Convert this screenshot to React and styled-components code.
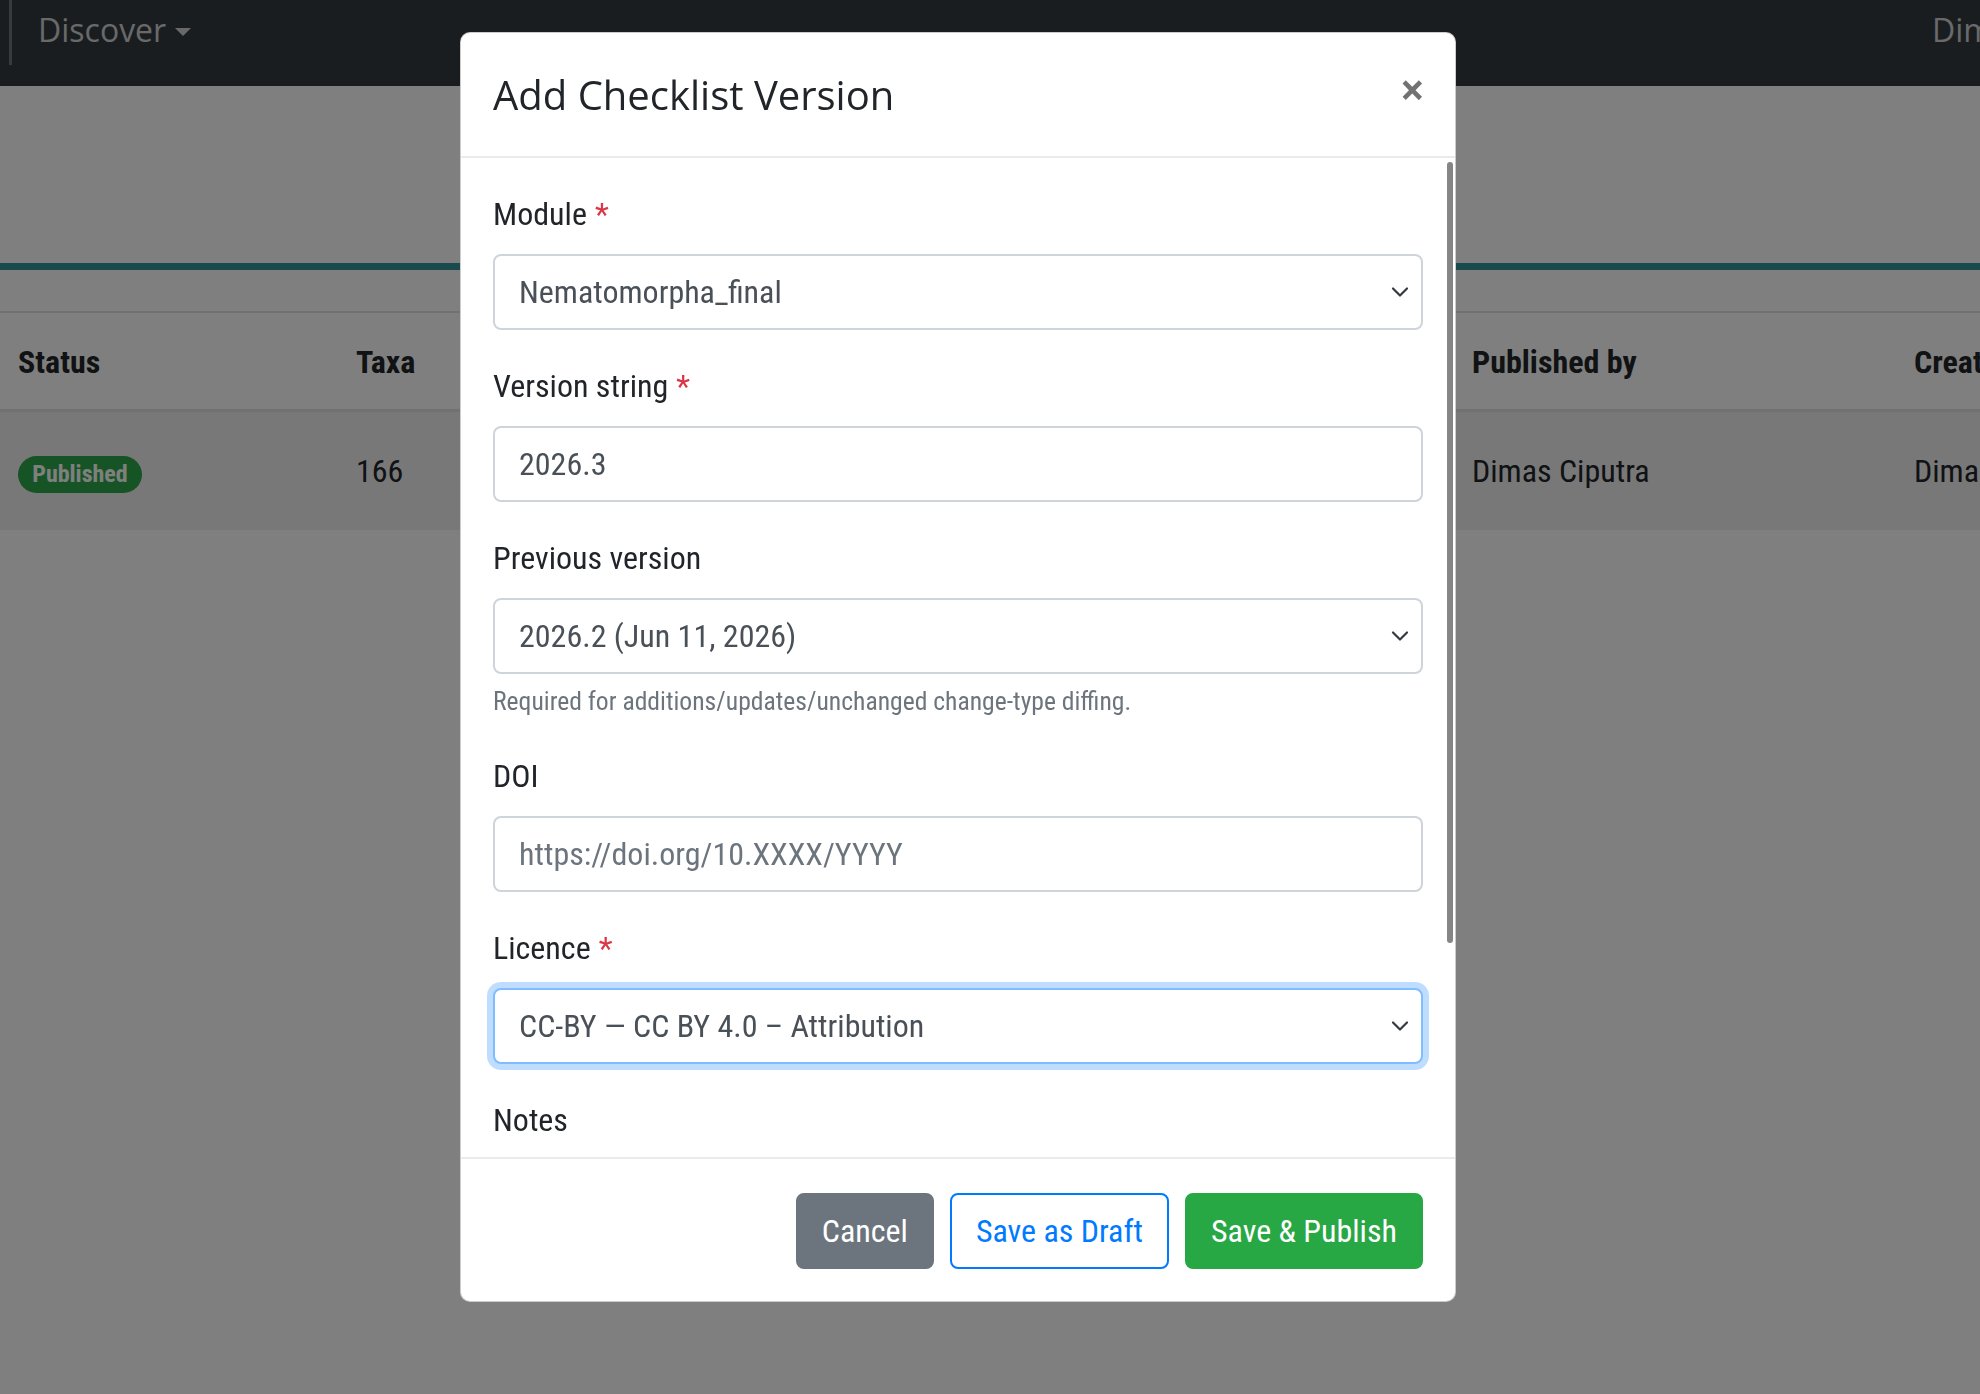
import React from 'react';
import styled, { createGlobalStyle } from 'styled-components';

const narrow = `"Roboto Condensed", "Roboto", "Liberation Sans", sans-serif`;
const sans = `"Open Sans", "Noto Sans", sans-serif`;

const GlobalStyle = createGlobalStyle`
  html, body { margin: 0; padding: 0; }
  body {
    width: 1980px;
    height: 1394px;
    overflow: hidden;
    background: #fff;
    font-family: ${narrow};
    font-stretch: condensed;
    color: #212529;
  }
  * { box-sizing: border-box; }
`;

const Page = styled.div`
  width: 1980px;
  height: 1394px;
  overflow: hidden;
`;

// ---- page behind the modal ----
const Navbar = styled.nav`
  height: 86px;
  background: #343a40;
  display: flex;
  align-items: flex-start;
  font-family: ${sans};
  font-stretch: normal;
`;

const NavSep = styled.div`
  width: 3px;
  height: 65px;
  margin-left: 9px;
  background: rgba(255, 255, 255, 0.3);
`;

const NavLink = styled.a`
  display: flex;
  align-items: center;
  margin-left: 26px;
  padding-top: 6px;
  font-size: 32px;
  line-height: 48px;
  color: rgba(255, 255, 255, 0.78);
`;

const Caret = styled.span`
  margin-left: 9px;
  margin-top: 4px;
  border-top: 8px solid currentColor;
  border-left: 8px solid transparent;
  border-right: 8px solid transparent;
`;

const NavUser = styled(NavLink)`
  margin-left: auto;
  margin-right: -164px;
`;

const Hero = styled.div`
  height: 177px;
`;

const TealRule = styled.div`
  height: 7px;
  background: #37949c;
  margin-bottom: 41px;
`;

const Row = styled.div`
  display: grid;
  grid-template-columns: 338px 300px 816px 442px 1fr;
  align-items: center;
  padding-left: 18px;
  white-space: nowrap;
  font-size: 32px;
  line-height: 48px;
  height: ${p => (p.$head ? '101px' : '118px')};
  padding-top: ${p => (p.$head ? '2px' : '0')};
  background: ${p => (p.$head ? '#fff' : '#f1f1f1')};
  border-top: ${p => (p.$head ? '2px solid #dee2e6' : 'none')};
  border-bottom: ${p => (p.$head ? '3px solid #dee2e6' : 'none')};
  font-weight: ${p => (p.$head ? 700 : 400)};
`;

const Badge = styled.span`
  display: inline-block;
  width: 124px;
  height: 37px;
  border-radius: 19px;
  background: #2ca84a;
  color: #fff;
  font-size: 24px;
  line-height: 37px;
  font-weight: 700;
  text-align: center;
`;

const Backdrop = styled.div`
  position: fixed;
  inset: 0;
  background: rgba(0, 0, 0, 0.5);
`;

// ---- modal ----
const ModalLayer = styled.div`
  position: fixed;
  inset: 0;
  padding: 32px 0 0 460px;
`;

const Dialog = styled.div`
  position: relative;
  width: 996px;
  height: 1270px;
  background: #fff;
  border: 1px solid rgba(0, 0, 0, 0.2);
  border-radius: 10px;
  display: flex;
  flex-direction: column;
  overflow: hidden;
`;

const Header = styled.div`
  display: flex;
  align-items: center;
  padding: 32px 32px 31px;
  border-bottom: 2px solid #e9ecef;
`;

const Title = styled.h5`
  margin: 0;
  font-family: ${sans};
  font-stretch: normal;
  font-weight: 400;
  font-size: 40px;
  line-height: 60px;
  color: #212529;
`;

const Close = styled.button`
  margin-left: auto;
  margin-top: -12px;
  margin-right: -2px;
  padding: 0;
  border: 0;
  background: none;
  font-family: ${sans};
  font-weight: 700;
  font-size: 44px;
  line-height: 1;
  color: #000;
  opacity: 0.55;
`;

const Body = styled.div`
  flex: 1;
  min-height: 0;
  overflow-y: auto;
  padding: 32px;
`;

// overlay scrollbar thumb of the scrolled modal body
const ScrollThumb = styled.div`
  position: absolute;
  right: 2px;
  top: 129px;
  width: 6px;
  height: 781px;
  border-radius: 3px;
  background: #868686;
`;

const Group = styled.div`
  margin-bottom: 32px;
`;

const Label = styled.label`
  display: block;
  font-size: 32px;
  line-height: 48px;
  margin-bottom: 16px;
  color: #212529;
`;

const Req = styled.span`
  color: #dc3545;
  margin-left: 8px;
`;

const fieldBase = `
  display: block;
  width: 100%;
  height: 76px;
  padding: 12px 24px;
  font-family: ${narrow};
  font-stretch: condensed;
  font-size: 32px;
  line-height: 48px;
  color: #495057;
  background: #fff;
  border-radius: 8px;
  outline: none;
`;

const Input = styled.input`
  ${fieldBase}
  border: 2px solid #ced4da;
  &::placeholder { color: #6c757d; }
`;

const TextArea = styled.textarea`
  ${fieldBase}
  height: 204px;
  resize: none;
  border: 2px solid #ced4da;
`;

const SelectWrap = styled.div`
  position: relative;
`;

const Select = styled.select`
  ${fieldBase}
  appearance: none;
  padding-right: 64px;
  border: 2px solid ${p => (p.$focus ? '#80bdff' : '#ced4da')};
  box-shadow: ${p => (p.$focus ? '0 0 0 6px rgba(0, 123, 255, 0.25)' : 'none')};
`;

const Chevron = styled.svg`
  position: absolute;
  right: 14px;
  top: 50%;
  transform: translateY(-50%);
  pointer-events: none;
`;

const Help = styled.small`
  display: block;
  margin-top: 8px;
  font-size: 25.6px;
  line-height: 38px;
  color: #6c757d;
`;

const Footer = styled.div`
  display: flex;
  justify-content: flex-end;
  align-items: center;
  gap: 16px;
  padding: 34px 32px 32px;
  border-top: 2px solid #e9ecef;
`;

const palette = {
  secondary: { bg: '#6c757d', border: '#6c757d', color: '#fff' },
  outline: { bg: '#fff', border: '#007bff', color: '#007bff' },
  success: { bg: '#28a745', border: '#28a745', color: '#fff' },
};

const Button = styled.button`
  height: 76px;
  padding: 12px 24px;
  font-family: ${narrow};
  font-stretch: condensed;
  font-size: 32px;
  line-height: 48px;
  border-radius: 8px;
  border: 2px solid ${p => palette[p.$kind].border};
  background: ${p => palette[p.$kind].bg};
  color: ${p => palette[p.$kind].color};
`;

const Arrow = () => (
  <Chevron width="18" height="11" viewBox="0 0 18 11">
    <path d="M2 2l7 7 7-7" fill="none" stroke="#343a40" strokeWidth="2.2" strokeLinecap="round" strokeLinejoin="round" />
  </Chevron>
);

export default function App() {
  return (
    <Page>
      <GlobalStyle />
      <Navbar>
        <NavSep />
        <NavLink>Discover<Caret /></NavLink>
        <NavUser>Dimas Ciputra</NavUser>
      </Navbar>
      <Hero />
      <TealRule />
      <Row $head>
        <div>Status</div>
        <div>Taxa</div>
        <div>Version</div>
        <div>Published by</div>
        <div>Created by</div>
      </Row>
      <Row>
        <div><Badge>Published</Badge></div>
        <div>166</div>
        <div>2026.2</div>
        <div>Dimas Ciputra</div>
        <div>Dimas Ciputra</div>
      </Row>
      <Backdrop />

      <ModalLayer>
        <Dialog>
          <Header>
            <Title>Add Checklist Version</Title>
            <Close>×</Close>
          </Header>
          <Body>
            <Group>
              <Label>Module<Req>*</Req></Label>
              <SelectWrap>
                <Select defaultValue="n">
                  <option value="n">Nematomorpha_final</option>
                </Select>
                <Arrow />
              </SelectWrap>
            </Group>
            <Group>
              <Label>Version string<Req>*</Req></Label>
              <Input defaultValue="2026.3" />
            </Group>
            <Group>
              <Label>Previous version</Label>
              <SelectWrap>
                <Select defaultValue="p">
                  <option value="p">2026.2 (Jun 11, 2026)</option>
                </Select>
                <Arrow />
              </SelectWrap>
              <Help>Required for additions/updates/unchanged change-type diffing.</Help>
            </Group>
            <Group>
              <Label>DOI</Label>
              <Input placeholder="https://doi.org/10.XXXX/YYYY" />
            </Group>
            <Group>
              <Label>Licence<Req>*</Req></Label>
              <SelectWrap>
                <Select $focus defaultValue="cc">
                  <option value="cc">CC-BY — CC BY 4.0 – Attribution</option>
                </Select>
                <Arrow />
              </SelectWrap>
            </Group>
            <Group>
              <Label>Notes</Label>
              <TextArea />
            </Group>
          </Body>
          <Footer>
            <Button $kind="secondary">Cancel</Button>
            <Button $kind="outline">Save as Draft</Button>
            <Button $kind="success">Save &amp; Publish</Button>
          </Footer>
          <ScrollThumb />
        </Dialog>
      </ModalLayer>
    </Page>
  );
}
